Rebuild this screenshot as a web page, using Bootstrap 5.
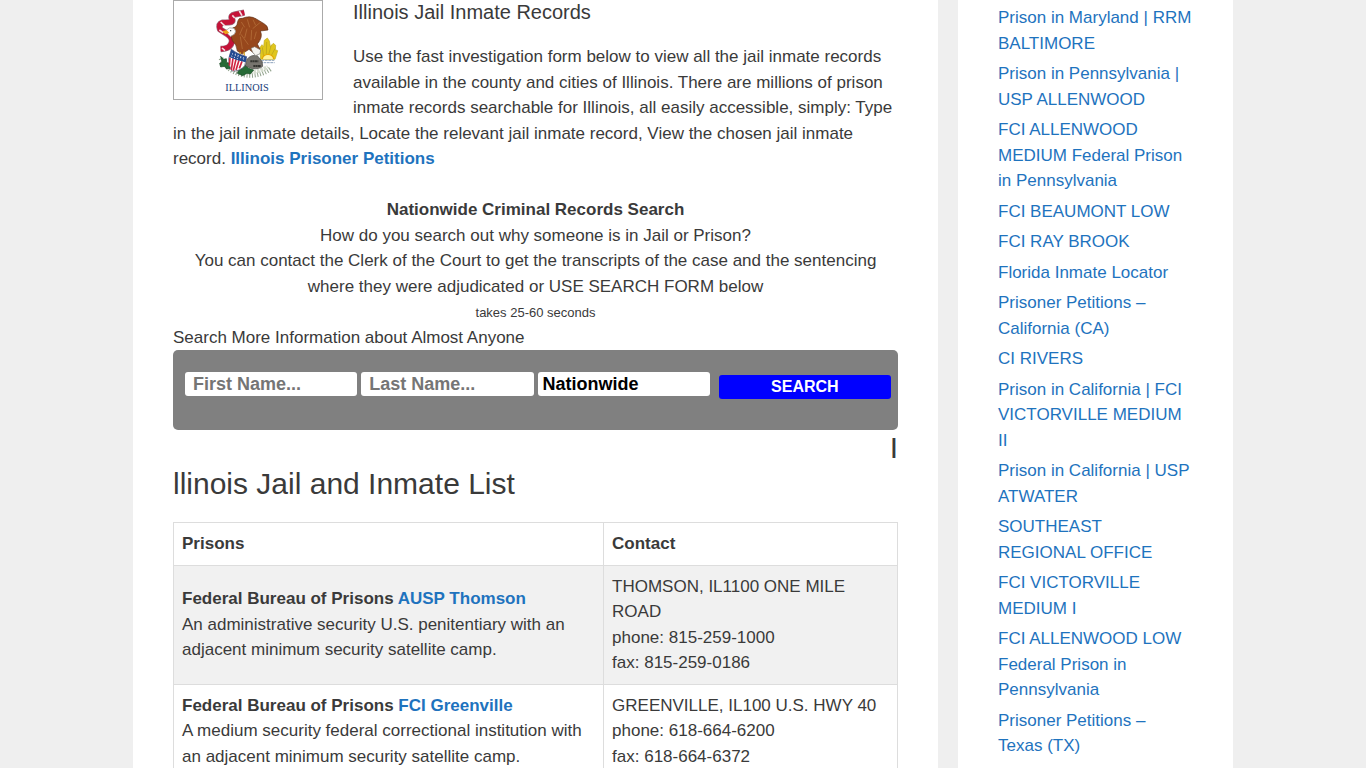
<!DOCTYPE html>
<html lang="en">
<head>
<meta charset="utf-8">
<meta name="viewport" content="width=device-width, initial-scale=1">
<title>Illinois Jail Inmate Records</title>
<link href="https://cdn.jsdelivr.net/npm/bootstrap@5.3.0/dist/css/bootstrap.min.css" rel="stylesheet">
<style>
  body { background: #efefef; color: #3a3a3a; font-family: "Liberation Sans", Arial, sans-serif; font-size: 17px; line-height: 1.5; }
  a { color: #1e73be; text-decoration: none; }
  .site { max-width: 1100px; gap: 20px; }
  .main-panel { padding: 0 40px; min-width: 0; }
  .side-panel { width: 25%; padding: 5px 40px 0; }
  .side-panel li { margin-bottom: 5px; }
  .page-title { font-size: 20px; font-weight: 400; margin-bottom: 20px; }
  .flag { width: 150px; height: 100px; margin: 0 30px 10px 0; }
  .note { font-size: 13px; }
  .search-bar { background: #808080; border-radius: 5px; height: 80px; padding: 22px 7px 0 12px; gap: 4px; }
  .search-bar input, .search-bar select, .search-bar button { flex: none; width: calc((100% - 17px) / 4); height: 24px; border: 0; border-radius: 3px; font-weight: 700; font-size: 18px; line-height: 24px; }
  .search-bar input { padding: 0 8px; }
  .search-bar input::placeholder { color: #757575; opacity: 1; }
  .search-bar select { appearance: none; background: #fff; color: #000; padding: 0 5px; }
  .search-bar button { background: #00f; color: #fff; font-size: 16px; padding: 0; margin: 3px 0 0 5px; }
  .list-title { font-size: 30px; font-weight: 400; margin-bottom: 20px; }
  .prisons { --bs-table-color: #3a3a3a; --bs-table-striped-color: #3a3a3a; --bs-table-striped-bg: #f1f1f1; border-color: #ddd; color: #3a3a3a; }
  .prisons col:first-child { width: 59.4%; }
</style>
</head>
<body>
<div class="site d-flex mx-auto min-vh-100">
  <main class="main-panel bg-white flex-fill">
    <svg class="flag float-start" viewBox="0 0 450 300" role="img" aria-label="Flag of Illinois">
      <rect x="1.5" y="1.5" width="447" height="297" fill="#fff" stroke="#aaa" stroke-width="3"/>
      <g transform="translate(111 0)">
        <g fill="none" stroke-linejoin="round">
          <path d="M103 38L76 43Q60 46 66 57Q71 66 57 67L37 68Q25 72 30 88L52 102Q75 119 60 137Q54 146 32 147" stroke="#9d7180" stroke-width="19"/>
          <path d="M103 38L76 43Q60 46 66 57Q71 66 57 67L37 68Q25 72 30 88L52 102Q75 119 60 137Q54 146 32 147" stroke="#c51238" stroke-width="15"/>
          <path d="M88 33l8 14M67 46l7 8M32 66l13 12M28 90l12 8M57 102l8 8M36 144l9 8" stroke="#f4d9dd" stroke-width="5"/>
        </g>
        <path d="M33 175Q49 210 91 222Q143 235 185 204" fill="none" stroke="#93a48e" stroke-width="15" stroke-dasharray="3 5"/>
        <path d="M42 181Q65 206 97 216Q139 221 174 201" fill="none" stroke="#d6ddcf" stroke-width="12" stroke-dasharray="8 3"/>
        <path d="M32 169l9 9 8-2 1 12 8 1 3 16-11 2-6-8-12 2-3-11 7-3zM87 209l12-5 7-9 10 10 15 5-10 12-10-2-13 7-16-7z" fill="#266a36" stroke="#12451e" stroke-width="2"/>
        <path d="M152 178l-1-14-2-20 7-10 5 6 2-19 9-7 6 9 3 17 9-10 7 6-1 13 7 3-4 14-4 12z" fill="#e0c61c" stroke="#c0ab20" stroke-width="2"/>
        <path d="M161 170l-4-28m12 22l1-38m6 38l8-30m-1 34l12-22" stroke="#b5a01c" stroke-width="2"/>
        <path d="M157 177a17 14 0 0 1 34 0" fill="#fff29b" stroke="#e6a900" stroke-width="4"/>
        <path d="M145 181h49M151 188h43" stroke="#8fa4bd" stroke-width="3" stroke-dasharray="8 2"/>
        <path d="M106 198l5-20q11-15 31-11l14 17 2 15q-9 9-31 7z" fill="#77746e" stroke="#464640" stroke-width="2"/>
        <path d="M121 184h24M130 198h23" stroke="#343430" stroke-width="6" stroke-dasharray="6 1"/>
        <path d="M62 92Q66 82 76 81Q82 76 84 62Q86 53 97 55Q120 45 139 57L162 71Q174 77 174 90L151 93Q160 111 142 132L150 147 132 160 117 148Q104 156 97 162L82 153Q80 132 67 122Q61 108 66 101z" fill="#97471c" stroke="#5c2d15" stroke-width="2"/>
        <path d="M94 66l10 16m8-24l7 24m10-23l8 17m15-10l-24 20m-30-4l-9 22m22-18l-7 28m21-24l-2 31m16-26l-6 22m-40-14l22 31m-24-24l6 37" fill="none" stroke="#b9753f" stroke-width="2"/>
        <path d="M123 145l11-5 18 10-2 11-13 6-9-10z" fill="#f6f4ef" stroke="#77746e" stroke-width="2"/>
        <path d="M48 91q10-12 24-6 9 8 1 18l-11 6q-7-3-10-9z" fill="#fff" stroke="#8f938f" stroke-width="2"/>
        <path d="M50 90l-13 4 9 9 12-4z" fill="#eca31b"/>
        <circle cx="62" cy="92" r="2" fill="#222"/>
        <path d="M91 156l-2 10m13-11l1 12" stroke="#d7a323" stroke-width="4"/>
        <path d="M64 148Q82 163 110 170L104 197Q89 215 66 213Q55 197 56 176z" fill="#fff" stroke="#4a4367" stroke-width="2"/>
        <path d="M60 173l-2 24m11-22l-5 35m14-32l-8 34m17-31l-9 29m18-26l-8 21" stroke="#d12341" stroke-width="5"/>
        <path d="M64 148Q82 163 110 170L107 187Q78 181 57 171z" fill="#224a91"/>
        <path d="M66 161l36 17M75 162l29 13M64 168l23 10" stroke="#eef3fc" stroke-width="3" stroke-dasharray="3 6"/>
        <text x="111" y="272" text-anchor="middle" font-family="Liberation Serif, serif" font-size="31" fill="#213d79">ILLINOIS</text>
      </g>
    </svg>
    <h1 class="page-title">Illinois Jail Inmate Records</h1>
    <p class="mb-0">Use the fast investigation form below to view all the jail inmate records available in the county and cities of Illinois. There are millions of prison inmate records searchable for Illinois, all easily accessible, simply: Type in the jail inmate details, Locate the relevant jail inmate record, View the chosen jail inmate record. <a href="#" class="fw-bold">Illinois Prisoner Petitions</a><br><br></p>
    <div class="text-center">
      <strong>Nationwide Criminal Records Search</strong><br>
      How do you search out why someone is in Jail or Prison?<br>
      You can contact the Clerk of the Court to get the transcripts of the case and the sentencing where they were adjudicated or USE SEARCH FORM below<br>
      <span class="note">takes 25-60 seconds</span>
    </div>
    <div>Search More Information about Almost Anyone</div>
    <form class="search-bar d-flex align-items-start">
      <input type="text" placeholder="First Name..." aria-label="First name">
      <input type="text" placeholder="Last Name..." aria-label="Last name">
      <select aria-label="State"><option>Nationwide</option></select>
      <button type="button">SEARCH</button>
    </form>
    <h2 class="list-title"><span class="d-block text-end">I</span>llinois Jail and Inmate List</h2>
    <table class="prisons table table-bordered table-striped align-middle mb-0">
      <colgroup><col><col></colgroup>
      <thead>
        <tr><th scope="col">Prisons</th><th scope="col">Contact</th></tr>
      </thead>
      <tbody class="border-top-0">
        <tr>
          <td><strong>Federal Bureau of Prisons <a href="#">AUSP Thomson</a></strong><br>An administrative security U.S. penitentiary with an adjacent minimum security satellite camp.</td>
          <td>THOMSON, IL1100 ONE MILE ROAD<br>phone: 815-259-1000<br>fax: 815-259-0186</td>
        </tr>
        <tr>
          <td><strong>Federal Bureau of Prisons <a href="#">FCI Greenville</a></strong><br>A medium security federal correctional institution with an adjacent minimum security satellite camp.</td>
          <td>GREENVILLE, IL100 U.S. HWY 40<br>phone: 618-664-6200<br>fax: 618-664-6372</td>
        </tr>
      </tbody>
    </table>
  </main>
  <aside class="side-panel bg-white flex-shrink-0">
    <ul class="list-unstyled mb-0">
      <li><a href="#">Prison in Maryland | RRM BALTIMORE</a></li>
      <li><a href="#">Prison in Pennsylvania | USP ALLENWOOD</a></li>
      <li><a href="#">FCI ALLENWOOD MEDIUM Federal Prison in Pennsylvania</a></li>
      <li><a href="#">FCI BEAUMONT LOW</a></li>
      <li><a href="#">FCI RAY BROOK</a></li>
      <li><a href="#">Florida Inmate Locator</a></li>
      <li><a href="#">Prisoner Petitions – California (CA)</a></li>
      <li><a href="#">CI RIVERS</a></li>
      <li><a href="#">Prison in California | FCI VICTORVILLE MEDIUM II</a></li>
      <li><a href="#">Prison in California | USP ATWATER</a></li>
      <li><a href="#">SOUTHEAST REGIONAL OFFICE</a></li>
      <li><a href="#">FCI VICTORVILLE MEDIUM I</a></li>
      <li><a href="#">FCI ALLENWOOD LOW Federal Prison in Pennsylvania</a></li>
      <li><a href="#">Prisoner Petitions – Texas (TX)</a></li>
    </ul>
  </aside>
</div>
<script src="https://cdn.jsdelivr.net/npm/bootstrap@5.3.0/dist/js/bootstrap.bundle.min.js"></script>
</body>
</html>
